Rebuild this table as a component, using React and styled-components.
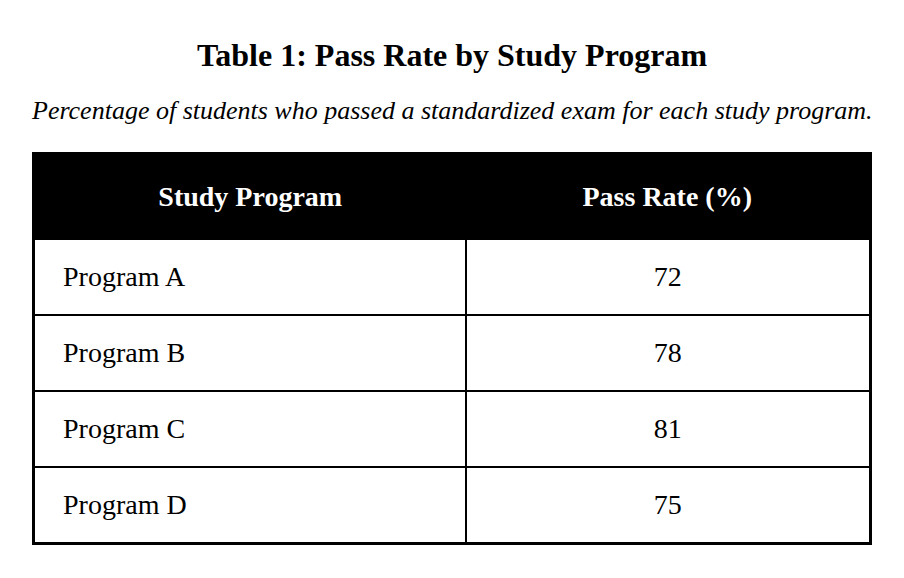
import React from 'react';
import { createGlobalStyle } from 'styled-components';
import styled from 'styled-components';

const GlobalStyle = createGlobalStyle`
  html, body {
    margin: 0;
    padding: 0;
    background: #ffffff;
  }
`;

const Page = styled.div`
  padding: 35px 32px 0;
  font-family: "Liberation Serif", "Times New Roman", serif;
  color: #000;
`;

const Title = styled.h1`
  margin: 0;
  text-align: center;
  font-size: 32px;
  font-weight: bold;
  line-height: 40px;
`;

const Caption = styled.p`
  margin: 21px 0 0;
  text-align: center;
  font-style: italic;
  font-size: 26px;
  line-height: 30px;
  white-space: nowrap;
`;

const Table = styled.table`
  margin-top: 26px;
  width: 100%;
  border-collapse: collapse;
  border: 3px solid #000;
  table-layout: fixed;
`;

const HeadCell = styled.th`
  background: #000;
  color: #fff;
  font-size: 28px;
  font-weight: bold;
  height: 83px;
  padding: 0 28px;
  text-align: center;
`;

const Cell = styled.td`
  border: 2px solid #000;
  font-size: 28px;
  height: 74px;
  padding: 0 28px;
  text-align: ${(p) => (p.center ? 'center' : 'left')};
`;

const rows = [
  { name: 'Program A', rate: 72 },
  { name: 'Program B', rate: 78 },
  { name: 'Program C', rate: 81 },
  { name: 'Program D', rate: 75 },
];

const App = () => (
  <Page>
    <GlobalStyle />
    <Title>Table 1: Pass Rate by Study Program</Title>
    <Caption>Percentage of students who passed a standardized exam for each study program.</Caption>
    <Table>
      <colgroup>
        <col style={{ width: '432px' }} />
        <col />
      </colgroup>
      <thead>
        <tr>
          <HeadCell>Study Program</HeadCell>
          <HeadCell>Pass Rate (%)</HeadCell>
        </tr>
      </thead>
      <tbody>
        {rows.map((row) => (
          <tr key={row.name}>
            <Cell>{row.name}</Cell>
            <Cell center>{row.rate}</Cell>
          </tr>
        ))}
      </tbody>
    </Table>
  </Page>
);

export default App;
